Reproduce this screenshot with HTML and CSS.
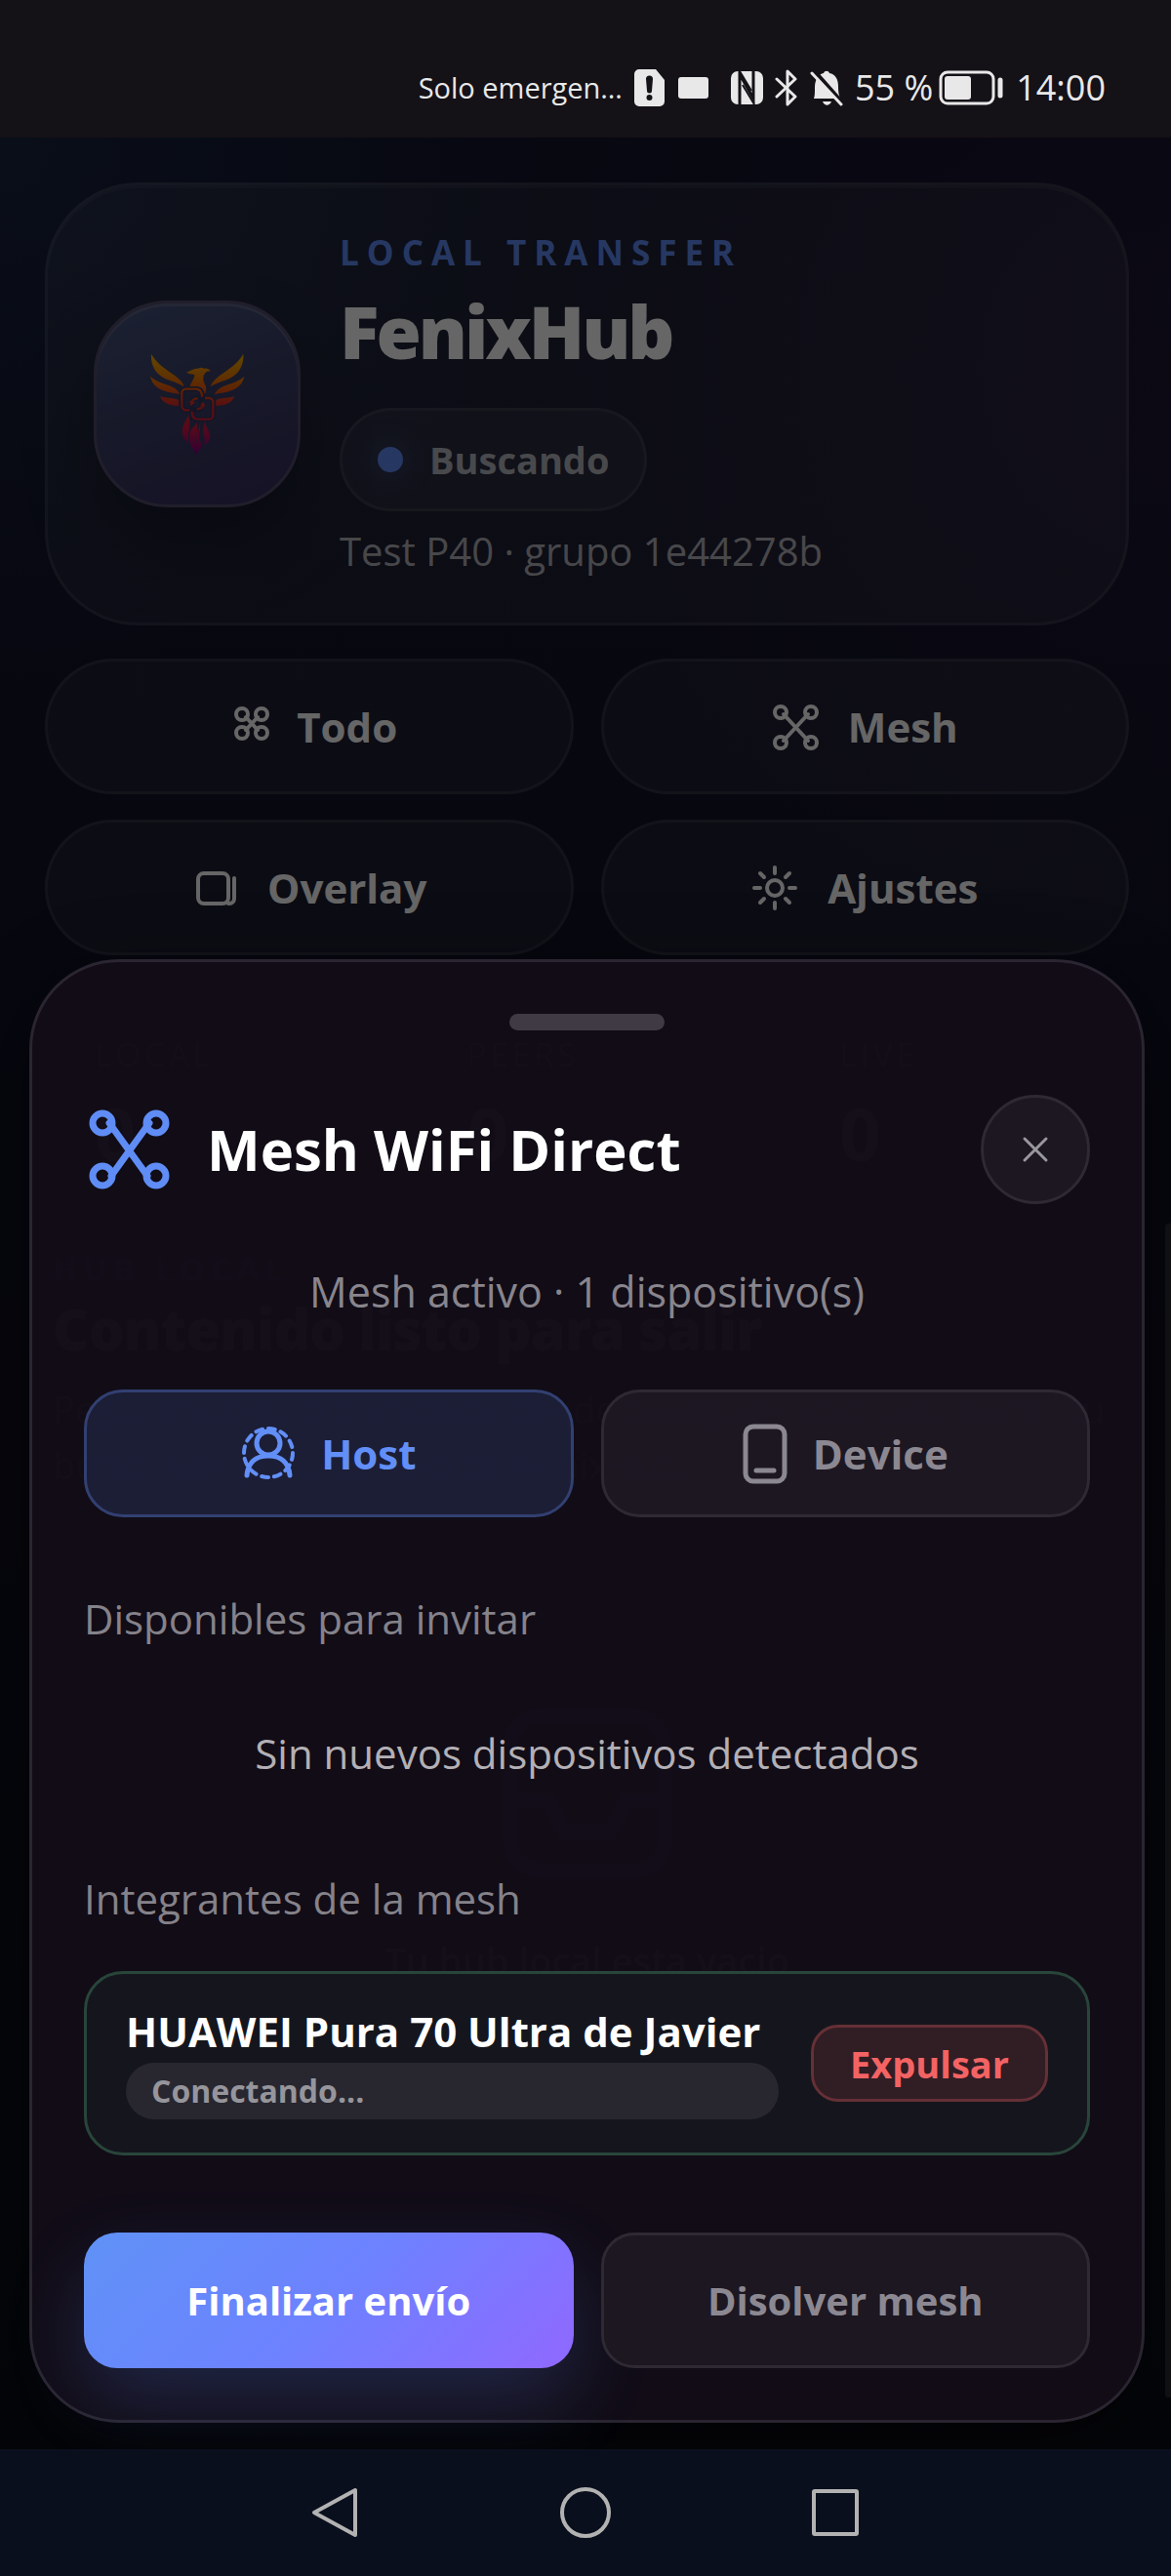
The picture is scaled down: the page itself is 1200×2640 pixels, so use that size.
FILE: index.html
```html
<!DOCTYPE html>
<html lang="es">
<head>
    <meta charset="UTF-8">
    <meta name="viewport" content="width=device-width, initial-scale=1.0">
    <title>FenixHub</title>
    <link rel="stylesheet" href="styles.css">
</head>
<body>
    <header class="status-bar">
        <span class="carrier">Solo emergen…</span>
        <svg width="31" height="38" viewBox="0 0 31 38" fill="#e8e8e8"><path fill-rule="evenodd" d="M5 0h17l9 11v22a5 5 0 0 1-5 5H5a5 5 0 0 1-5-5V5a5 5 0 0 1 5-5zM12 10l1 12a2.500 2.500 0 0 0 5 0l1-12a3.500 3.500 0 0 0-7 0zM15.500 26a3 3 0 1 0 0 6 3 3 0 0 0 0-6z"/></svg>
        <svg width="44" height="38" viewBox="0 0 44 38" fill="#e8e8e8"><rect x="2" y="8" width="31" height="22" rx="3"/></svg>
        <svg width="33" height="34" viewBox="0 0 33 34"><rect width="33" height="34" rx="7" fill="#e8e8e8"/><path d="M9 34V3l14 25V0" fill="none" stroke="#141117" stroke-width="3"/><path d="M12 14l12 20M9 0l12 20" fill="none" stroke="#141117" stroke-width="2"/></svg>
        <svg width="24" height="38" viewBox="0 0 24 38" fill="none" stroke="#e8e8e8" stroke-width="3" stroke-linejoin="round" stroke-linecap="round"><path d="M2 10l19 18-8 8V2l8 8L2 28"/></svg>
        <svg width="34" height="38" viewBox="0 0 34 38"><path fill="#e8e8e8" d="M4 30c1-3 1-6 1-11C5 10 9 5 14 4c1-3 5-3 6 0 6 1 9 6 9 14 0 6 1 9 2 12zM13 33h9c-2 5-7 5-9 0z"/><path d="M4 1l29 33" stroke="#141117" stroke-width="4"/><path d="M2 4l30 32" stroke="#e8e8e8" stroke-width="3" stroke-linecap="round"/></svg>
        <span class="clock">55 %</span>
        <svg class="battery" width="67" height="36" viewBox="0 0 67 36" fill="none"><rect x="2" y="2" width="54" height="32" rx="7" stroke="#e8e8e8" stroke-width="3"/><rect x="6" y="6" width="27" height="24" rx="3" fill="#e8e8e8"/><path d="M63 10v16" stroke="#e8e8e8" stroke-width="5" stroke-linecap="round"/></svg>
        <span class="clock">14:00</span>
    </header>

    <div class="app">
        <main class="page">
            <section class="hero">
                <div class="logo">
                    <svg width="98" height="106" viewBox="219 214 294 318">
                        <defs>
                            <linearGradient id="fire" gradientUnits="userSpaceOnUse" x1="0" y1="218" x2="0" y2="528">
                                <stop offset="0" stop-color="#f0b400"/>
                                <stop offset=".28" stop-color="#f07000"/>
                                <stop offset=".5" stop-color="#e02c28"/>
                                <stop offset=".75" stop-color="#d01848"/>
                                <stop offset="1" stop-color="#800080"/>
                            </linearGradient>
                        </defs>
                        <g id="wing" fill="url(#fire)">
                            <path d="M225 219c18 32 46 47 72 66 16 12 26 22 29 35-14-9-29-14-43-19-33-11-61-35-58-82z"/>
                            <path d="M222 288c22 20 48 23 69 33 11 5 18 13 23 23-17-6-28-4-45-10-25-8-42-22-47-46z"/>
                            <path d="M252 350c18 6 38 3 57 11v18c-27-1-47-6-57-29z"/>
                        </g>
                        <use href="#wing" transform="matrix(-1 0 0 1 733 0)"/>
                        <path fill="url(#fire)" d="M333 276c12-4 21-13 36-12 6-4 12-3 17 0 10-2 17 2 22 8-9-1-16 2-20 10-7 13-1 25 5 37 2 9 0 17-4 24-7-16-17-24-31-24-5 0-10 0-15 2 6-16 15-27 15-37-8-5-17-2-25-8z"/>
                        <g fill="none" stroke="#2f3760" stroke-width="15">
                            <rect x="319" y="327" width="61" height="65" rx="14"/>
                            <rect x="350" y="355" width="65" height="65" rx="14"/>
                        </g>
                        <g fill="none" stroke="url(#fire)" stroke-width="7">
                            <path d="M343 392h-12a12 12 0 0 1-12-12v-41a12 12 0 0 1 12-12h30c14 0 20 8 20 24"/>
                            <path d="M390 355h13a12 12 0 0 1 12 12v41a12 12 0 0 1-12 12h-34c-13 0-19-8-19-24"/>
                            <path d="M347 371c3-9 10-15 21-15M386 374c-2 10-10 15-21 15"/>
                        </g>
                        <path fill="url(#fire)" d="M342 364l5 16 13-12zM375 379l10-14 5 16z"/>
                        <path fill="url(#fire)" d="M340 406c2 20 7 28 1 48-3 14-3 26-4 38-20-17-20-42-11-59 4-10 10-17 14-27zM364 430c9 22-4 40 0 60 3 12 10 18 3 40-22-26-29-45-24-67 3-14 17-20 21-33zM390 424c2 24 17 32 16 51-1 11-8 19-18 24 5-22-6-32-3-50 1-9 4-17 5-25zM375 434c2 20-5 28-1 46 2 10 7 16 5 28-6 5-8 6-11 12 4-22-5-30-4-48 2-14 9-22 11-38z"/>
                    </svg>
                </div>
                <div class="hero-text">
                    <p class="eyebrow">LOCAL TRANSFER</p>
                    <h1>FenixHub</h1>
                    <p class="state"><span class="dot"></span>Buscando</p>
                    <p class="device-line">Test P40 · grupo 1e44278b</p>
                </div>
            </section>

            <nav class="menu">
                <button type="button" class="menu-btn">
                    <svg viewBox="0 0 54 54"><circle cx="22" cy="14" r="6"/><circle cx="42" cy="14" r="6"/><circle cx="22" cy="33" r="6"/><circle cx="42" cy="33" r="6"/><path d="M26 17l12 13M38 17L26 30"/></svg>
                    Todo
                </button>
                <button type="button" class="menu-btn">
                    <svg viewBox="0 0 54 54"><circle cx="9" cy="12" r="6"/><circle cx="40" cy="12" r="6"/><circle cx="9" cy="43" r="6"/><circle cx="40" cy="43" r="6"/><path d="M12 14l25 27M37 14L12 41"/></svg>
                    Mesh
                </button>
                <button type="button" class="menu-btn">
                    <svg viewBox="0 0 54 54"><rect x="7" y="12" width="31" height="31" rx="6"/><path d="M38 43h1a5 5 0 0 0 5-5V17"/></svg>
                    Overlay
                </button>
                <button type="button" class="menu-btn">
                    <svg viewBox="0 0 54 54"><circle cx="24" cy="27" r="8"/><path d="M24 6v6M24 42v6M3 27h6M39 27h6M9 12l4 4M35 38l4 4M9 42l4-4M35 16l4-4"/></svg>
                    Ajustes
                </button>
            </nav>

            <section class="stats">
                <div class="stat"><span>LOCAL</span><b>0</b></div>
                <div class="stat"><span>PEERS</span><b>0</b></div>
                <div class="stat"><span>LIVE</span><b>0</b></div>
            </section>

            <section class="hub">
                <p class="hub-label">HUB LOCAL</p>
                <h2>Contenido listo para salir</h2>
                <p class="hub-copy">Pega, importa o comparte desde cualquier app para llenar tu buffer temporal dentro de FenixHub.</p>
                <div class="empty">
                    <svg width="190" height="190" viewBox="0 0 24 24"><rect x="2" y="2" width="20" height="20" rx="4"/><path d="M2 13h5l2 4h6l2-4h5"/></svg>
                    <p>Tu hub local esta vacio</p>
                </div>
            </section>
        </main>

        <div class="backdrop">
            <div class="scroll-thumb"></div>
            <section class="sheet" role="dialog" aria-labelledby="sheet-title">
                <div class="handle"></div>
                <div class="sheet-head">
                    <svg class="mesh-icon" viewBox="0 0 92 92"><circle cx="19" cy="19" r="10"/><circle cx="74" cy="19" r="10"/><circle cx="19" cy="73" r="10"/><circle cx="74" cy="73" r="10"/><path d="M26 19l39 54M67 19L28 73"/></svg>
                    <h2 id="sheet-title">Mesh WiFi Direct</h2>
                    <button type="button" class="close" aria-label="Cerrar">
                        <svg width="28" height="28" viewBox="0 0 28 28"><path d="M3 3l22 22M25 3L3 25"/></svg>
                    </button>
                </div>

                <p class="mesh-state">Mesh activo · 1 dispositivo(s)</p>

                <div class="roles">
                    <button type="button" class="role active">
                        <svg width="56" height="62" viewBox="0 0 56 62"><circle cx="28" cy="30" r="25" stroke-width="4" stroke-dasharray="7 6"/><circle cx="28" cy="20" r="12"/><path d="M6 53c1-13 9-20 22-20s21 7 22 20"/></svg>
                        Host
                    </button>
                    <button type="button" class="role">
                        <svg width="46" height="62" viewBox="0 0 46 62"><rect x="3" y="3" width="40" height="56" rx="8"/><path d="M14 48h18"/></svg>
                        Device
                    </button>
                </div>

                <h3 class="group-title">Disponibles para invitar</h3>
                <p class="none-found">Sin nuevos dispositivos detectados</p>

                <h3 class="group-title members">Integrantes de la mesh</h3>
                <div class="member">
                    <div class="member-info">
                        <p class="member-name">HUAWEI Pura 70 Ultra de Javier</p>
                        <p class="member-state">Conectando...</p>
                    </div>
                    <button type="button" class="kick">Expulsar</button>
                </div>

                <div class="actions">
                    <button type="button" class="primary">Finalizar envío</button>
                    <button type="button" class="secondary">Disolver mesh</button>
                </div>
            </section>
        </div>
    </div>

    <footer class="nav-bar">
        <button type="button" aria-label="Atrás"><svg viewBox="0 0 56 56"><path d="M48 5v46L6 28z"/></svg></button>
        <button type="button" aria-label="Inicio"><svg viewBox="0 0 56 56"><circle cx="28" cy="28" r="24"/></svg></button>
        <button type="button" aria-label="Recientes"><svg viewBox="0 0 56 56"><rect x="6" y="6" width="44" height="44" rx="1"/></svg></button>
    </footer>
</body>
</html>
```
FILE: styles.css
```css
* {
    box-sizing: border-box;
}
body {
    margin: 0;
    height: 100vh;
    display: flex;
    flex-direction: column;
    background: #0a0f1d;
    color: #fff;
    font-family: "Open Sans", sans-serif;
}
h1, h2, h3, p {
    margin: 0;
}
button {
    font-family: inherit;
    color: inherit;
    cursor: pointer;
}
svg {
    flex: none;
}

/* system status bar */
.status-bar {
    display: flex;
    align-items: center;
    justify-content: flex-end;
    gap: 12px;
    height: 141px;
    padding: 38px 67px 0 0;
    background: #141117;
    color: #e8e8e8;
}
.carrier {
    font-size: 29px;
}
.clock {
    font-size: 36px;
}
.battery {
    margin-left: -6px;
}

/* page under the sheet */
.app {
    position: relative;
    flex: 1;
    min-height: 0;
    overflow: hidden;
}
.page {
    height: 100%;
    padding: 46px 43px 0 46px;
    background:
        radial-gradient(circle at 0 0, rgba(70, 150, 220, 0.12), transparent 560px),
        radial-gradient(circle at 100% 10%, rgba(170, 60, 150, 0.08), transparent 640px),
        linear-gradient(#12142a, #121328 30%, #0a0e16);
}
.hero {
    display: flex;
    align-items: center;
    gap: 40px;
    padding: 47px;
    border: 3px solid rgba(255, 255, 255, 0.08);
    border-radius: 96px;
    background: rgba(255, 255, 255, 0.06);
    box-shadow: inset 0 3px 0 rgba(255, 255, 255, 0.05);
}
.logo {
    flex: none;
    display: flex;
    align-items: center;
    justify-content: center;
    width: 212px;
    height: 212px;
    border: 3px solid #544d6c;
    border-radius: 76px;
    background: linear-gradient(160deg, #465580, #3b4068 45%, #352d5c);
    box-shadow: inset 0 3px 0 #5c6186, 0 40px 70px rgba(0, 0, 0, 0.25);
}
.eyebrow {
    font-size: 35px;
    line-height: 44px;
    font-weight: 700;
    letter-spacing: 8px;
    color: #5f8df5;
}
.hero h1 {
    margin: 16px 0 37px;
    font-size: 75px;
    line-height: 84px;
    font-weight: 800;
    letter-spacing: -3px;
}
.state {
    display: flex;
    align-items: center;
    gap: 27px;
    width: fit-content;
    height: 106px;
    padding: 0 36px;
    border: 3px solid rgba(255, 255, 255, 0.08);
    border-radius: 53px;
    background: rgba(255, 255, 255, 0.05);
    font-size: 38px;
    font-weight: 700;
    color: rgba(255, 255, 255, 0.66);
}
.dot {
    width: 26px;
    height: 26px;
    border-radius: 50%;
    background: #5f8df5;
    box-shadow: 0 0 30px rgba(95, 141, 245, 0.4);
}
.device-line {
    margin-top: 15px;
    font-size: 40px;
    line-height: 52px;
    color: rgba(255, 255, 255, 0.66);
}

.menu {
    display: grid;
    grid-template-columns: 1fr 1fr;
    gap: 26px 28px;
    margin-top: 34px;
}
.menu-btn {
    display: flex;
    align-items: center;
    justify-content: center;
    gap: 24px;
    height: 139px;
    border: 3px solid rgba(255, 255, 255, 0.08);
    border-radius: 70px;
    background: rgba(255, 255, 255, 0.06);
    font-size: 42px;
    font-weight: 700;
}
.menu-btn svg {
    width: 54px;
    height: 54px;
    fill: none;
    stroke: currentColor;
    stroke-width: 4;
    stroke-linecap: round;
}

.stats {
    display: grid;
    grid-template-columns: repeat(3, 1fr);
    gap: 34px;
    margin-top: 34px;
}
.stat {
    display: flex;
    flex-direction: column;
    gap: 20px;
    height: 225px;
    padding: 42px 48px;
    border: 3px solid rgba(255, 255, 255, 0.08);
    border-radius: 70px;
    font-size: 33px;
    line-height: 46px;
    letter-spacing: 4px;
    color: rgba(255, 255, 255, 0.6);
}
.stat b {
    font-size: 74px;
    line-height: 76px;
    color: #fff;
}
.hub {
    margin-top: 40px;
    padding: 0 8px;
}
.hub-label {
    font-size: 33px;
    line-height: 46px;
    font-weight: 700;
    letter-spacing: 6px;
    color: #5f8df5;
}
.hub h2 {
    font-size: 58px;
    line-height: 76px;
    font-weight: 800;
    letter-spacing: -1px;
}
.hub-copy {
    margin-top: 16px;
    font-size: 38px;
    line-height: 57px;
    color: rgba(255, 255, 255, 0.66);
}
.empty {
    display: flex;
    flex-direction: column;
    align-items: center;
    gap: 50px;
    margin-top: 44px;
    padding: 166px 0;
    border: 3px solid rgba(255, 255, 255, 0.08);
    border-radius: 96px;
    font-size: 38px;
    font-weight: 600;
}
.empty svg {
    fill: none;
    stroke: #4a5fc0;
    stroke-width: 2;
}

/* mesh sheet */
.backdrop {
    position: absolute;
    inset: 0;
    display: flex;
    flex-direction: column;
    justify-content: flex-end;
    padding: 0 27px 27px 30px;
    background: rgba(0, 0, 0, 0.6);
}
.scroll-thumb {
    position: absolute;
    right: 0;
    top: 47%;
    bottom: 53px;
    width: 6px;
    border-radius: 3px 0 0 3px;
    background: #101013;
}
.sheet {
    padding: 53px;
    border: 3px solid #2a2530;
    border-radius: 92px;
    background: rgba(18, 12, 23, 0.97);
    box-shadow: 0 20px 80px rgba(0, 0, 0, 0.4);
}
.handle {
    width: 159px;
    height: 17px;
    margin: 0 auto 66px;
    border-radius: 9px;
    background: #403a45;
}
.sheet-head {
    display: flex;
    align-items: center;
}
.mesh-icon {
    width: 92px;
    height: 92px;
    margin-right: 34px;
    fill: none;
    stroke: #5f8df5;
    stroke-width: 7;
    stroke-linecap: round;
}
.sheet-head h2 {
    flex: 1;
    font-size: 58px;
    line-height: 72px;
    font-weight: 700;
}
.close {
    display: flex;
    align-items: center;
    justify-content: center;
    width: 112px;
    height: 112px;
    padding: 0;
    border: 3px solid #2e2933;
    border-radius: 50%;
    background: #1c1721;
}
.close svg {
    fill: none;
    stroke: #9a979f;
    stroke-width: 3;
    stroke-linecap: round;
}
.mesh-state {
    margin: 60px 0 70px;
    font-size: 43px;
    line-height: 60px;
    text-align: center;
    color: #88858d;
}
.roles {
    display: grid;
    grid-template-columns: 1fr 1fr;
    gap: 28px;
}
.role {
    display: flex;
    align-items: center;
    justify-content: center;
    gap: 26px;
    height: 131px;
    border: 3px solid #2e2933;
    border-radius: 40px;
    background: rgba(30, 24, 35, 0.96);
    font-size: 42px;
    font-weight: 700;
    color: #8b8892;
}
.role.active {
    border-color: #324071;
    background: rgba(29, 31, 56, 0.96);
    color: #628ff7;
}
.role svg {
    fill: none;
    stroke: currentColor;
    stroke-width: 5;
    stroke-linecap: round;
}
.group-title {
    margin-top: 74px;
    font-size: 42px;
    line-height: 60px;
    font-weight: 400;
    color: #85828a;
}
.none-found {
    margin-top: 78px;
    font-size: 42px;
    line-height: 60px;
    text-align: center;
    color: #b3b0b5;
}
.members {
    margin-top: 89px;
}
.member {
    display: flex;
    align-items: center;
    gap: 33px;
    margin-top: 44px;
    padding: 34px 40px;
    border: 3px solid #29453a;
    border-radius: 40px;
    background: rgba(22, 23, 30, 0.97);
}
.member-info {
    flex: 1;
}
.member-name {
    margin-bottom: 8px;
    font-size: 42px;
    line-height: 49px;
    font-weight: 700;
}
.member-state {
    padding: 0 26px;
    border-radius: 29px;
    background: #282730;
    font-size: 32px;
    line-height: 58px;
    font-weight: 700;
    color: #96959b;
}
.kick {
    height: 79px;
    padding: 0 37px;
    border: 3px solid #653036;
    border-radius: 28px;
    background: #311d24;
    font-size: 38px;
    font-weight: 700;
    color: #f36363;
}
.actions {
    display: grid;
    grid-template-columns: 1fr 1fr;
    gap: 28px;
    margin-top: 79px;
}
.primary, .secondary {
    height: 139px;
    border: none;
    border-radius: 34px;
    font-size: 40px;
    font-weight: 700;
}
.primary {
    background: linear-gradient(135deg, #5f92f6, #6d82ff 50%, #9068ff);
    box-shadow: 0 34px 80px rgba(95, 141, 255, 0.2);
}
.secondary {
    border: 3px solid #2e2933;
    background: #1c1721;
    color: #8b8892;
}

/* system navigation bar */
.nav-bar {
    display: flex;
    align-items: center;
    justify-content: center;
    gap: 200px;
    height: 130px;
}
.nav-bar button {
    padding: 0;
    border: none;
    background: none;
}
.nav-bar svg {
    display: block;
    width: 56px;
    height: 56px;
    fill: none;
    stroke: #b2b2b2;
    stroke-width: 4;
    stroke-linejoin: round;
}
```
